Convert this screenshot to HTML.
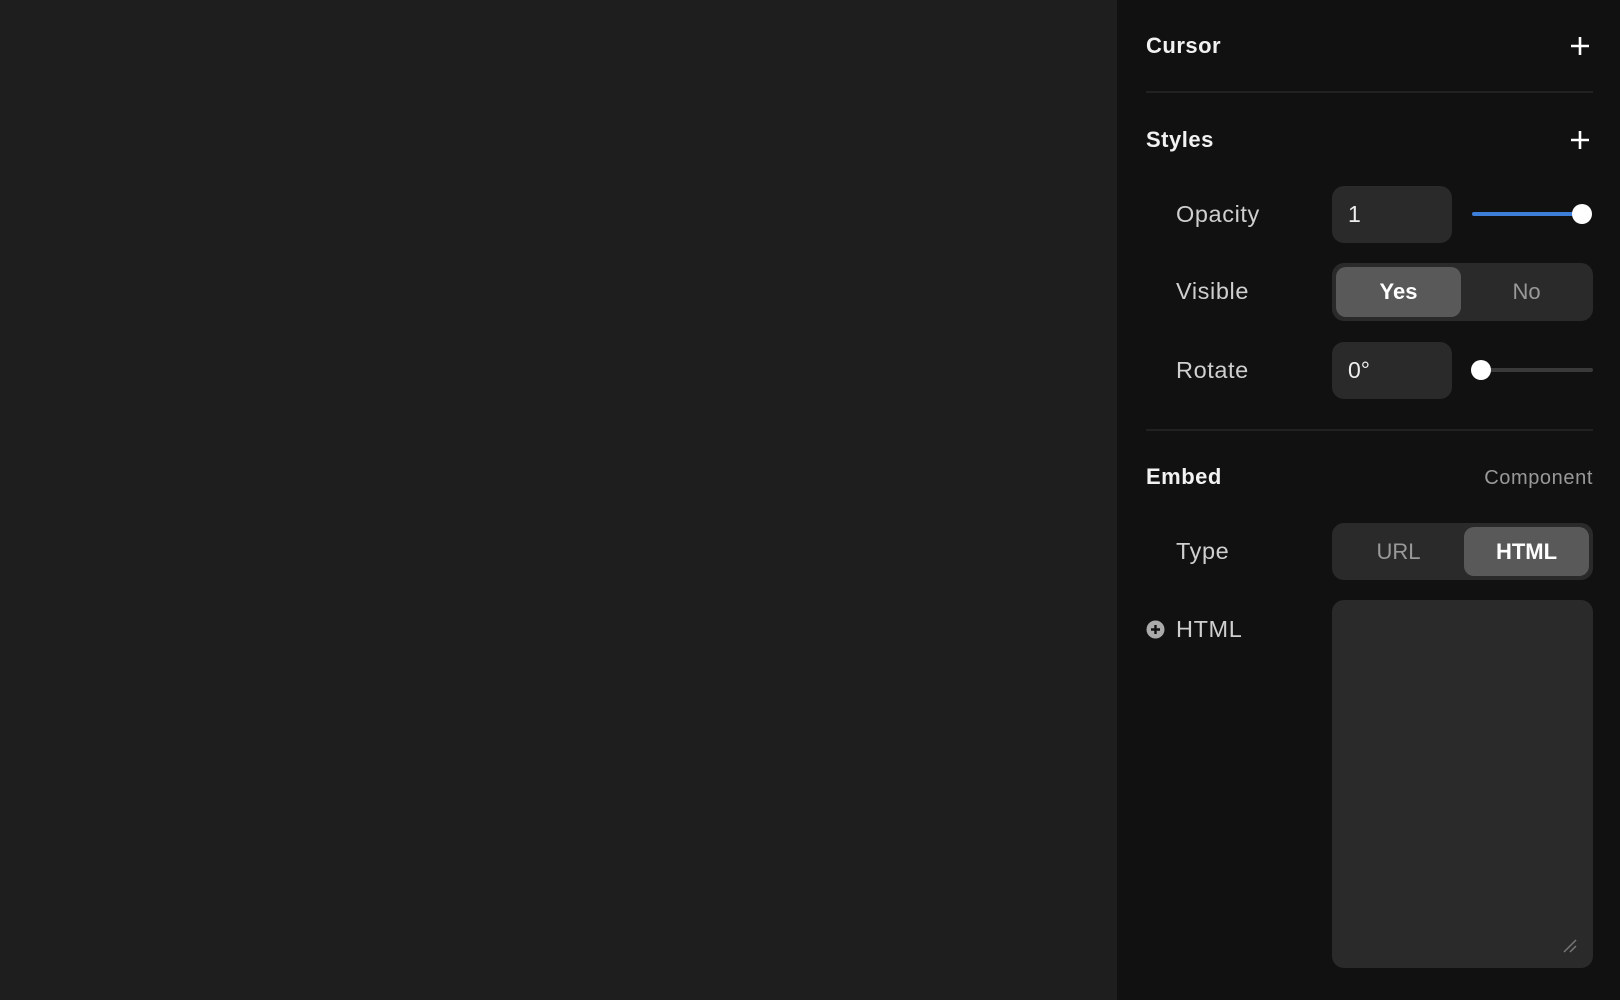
<!DOCTYPE html>
<html><head><style>
*{margin:0;padding:0;box-sizing:border-box}
body{width:1620px;height:1000px;background:#1e1e1e;font-family:"Liberation Sans",sans-serif;position:relative;overflow:hidden}
.panel{position:absolute;left:1117px;top:0;width:503px;height:1000px;background:#111}
.a{position:absolute}
.h{font-weight:bold;font-size:22px;color:#f2f2f2;left:1146px;line-height:24px;letter-spacing:0.5px}
.lbl{font-size:23.5px;color:#cfcfcf;left:1176px;line-height:24px;letter-spacing:0.6px}
.inp{background:#2a2a2a;border-radius:12px;left:1332px;width:120px;color:#eee;font-size:23px;padding-left:16px;display:flex;align-items:center}
.seg{background:#2a2a2a;border-radius:12px;left:1332px;width:261px}
.opt{position:absolute;top:4px;bottom:4px;width:125px;border-radius:10px;display:flex;align-items:center;justify-content:center;font-size:22px}
.line{height:2px;background:#222;left:1146px;width:447px}
</style></head><body>
<div class="panel"></div>
<div class="a h" style="top:34px">Cursor</div>
<svg class="a" style="left:1570px;top:36px" width="20" height="20"><path d="M10 1V19M1 10H19" stroke="#fff" stroke-width="2.6"/></svg>
<div class="a line" style="top:91px"></div>
<div class="a h" style="top:128px">Styles</div>
<svg class="a" style="left:1570px;top:130px" width="20" height="20"><path d="M10 1V19M1 10H19" stroke="#fff" stroke-width="2.6"/></svg>

<div class="a lbl" style="top:202px">Opacity</div>
<div class="a inp" style="top:186px;height:57px">1</div>
<div class="a" style="left:1472px;top:212px;width:108px;height:4px;background:#3d7fd8;border-radius:2px"></div>
<div class="a" style="left:1572px;top:204px;width:20px;height:20px;border-radius:50%;background:#fff"></div>

<div class="a lbl" style="top:279px">Visible</div>
<div class="a seg" style="top:263px;height:58px">
<div class="opt" style="left:4px;background:#595959;color:#fff;font-weight:bold">Yes</div>
<div class="opt" style="left:132px;color:#999">No</div></div>

<div class="a lbl" style="top:358px">Rotate</div>
<div class="a inp" style="top:342px;height:57px">0°</div>
<div class="a" style="left:1480px;top:368px;width:113px;height:4px;background:#3a3a3a;border-radius:2px"></div>
<div class="a" style="left:1471px;top:360px;width:20px;height:20px;border-radius:50%;background:#fff"></div>

<div class="a line" style="top:429px"></div>
<div class="a h" style="top:465px">Embed</div>
<div class="a" style="right:27px;top:467px;font-size:20px;color:#999;line-height:22px;letter-spacing:0.6px">Component</div>

<div class="a lbl" style="top:539px">Type</div>
<div class="a seg" style="top:523px;height:57px">
<div class="opt" style="left:4px;color:#999">URL</div>
<div class="opt" style="left:132px;background:#595959;color:#fff;font-weight:bold">HTML</div></div>

<svg class="a" style="left:1146px;top:620px" width="19" height="19"><circle cx="9.5" cy="9.5" r="9" fill="#aaa"/><path d="M9.5 5V14M5 9.5H14" stroke="#111" stroke-width="2.4"/></svg>
<div class="a lbl" style="top:617px">HTML</div>
<div class="a" style="left:1332px;top:600px;width:261px;height:368px;background:#2a2a2a;border-radius:12px"></div>
<svg class="a" style="left:1562px;top:938px" width="16" height="16"><path d="M2 14L14 2M8 14L14 8" stroke="#777" stroke-width="1.5"/></svg>
</body></html>
